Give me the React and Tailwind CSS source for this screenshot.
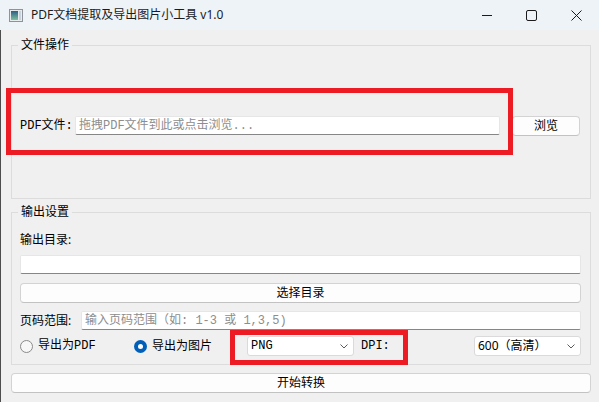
import React from 'react';

const ui = "font-['Noto_Sans','Noto_Sans_CJK_SC',sans-serif]";
const song = "font-['Liberation_Mono','Noto_Sans_CJK_SC',monospace]";

const Chevron = () => (
  <svg width="8" height="5" viewBox="0 0 8 5" className="shrink-0">
    <path d="M0.5 0.5 L4 4 L7.5 0.5" fill="none" stroke="#5c5c5c" strokeWidth="1" />
  </svg>
);

const Combo = ({ children, className = '' }) => (
  <div className={`w-[107px] h-[20px] bg-white border border-[#dadada] rounded-[3px] flex items-center justify-between pl-[3px] pr-[5px] ${className}`}>
    {children}
    <Chevron />
  </div>
);

const Button = ({ children, className = '' }) => (
  <button className={`h-[20px] bg-[#fdfdfd] border border-[#d3d3d3] border-b-[#c2c2c2] rounded-[4px] text-[12px] leading-none text-black ${ui} ${className}`}>
    {children}
  </button>
);

const Input = ({ placeholder, className = '' }) => (
  <div className={`h-[19px] bg-white border border-[#e6e6e6] border-b-[#868686] rounded-[2px] flex items-center pl-[3px] ${className}`}>
    {placeholder && (
      <span className={`text-[12px] leading-none text-[#8d8d8d] ${song}`}>{placeholder}</span>
    )}
  </div>
);

const Group = ({ title, children }) => (
  <fieldset className="border border-[#dcdcdc] m-0 p-0">
    <legend className={`ml-[6px] px-[3px] text-[12px] leading-[16px] text-black ${ui}`}>{title}</legend>
    {children}
  </fieldset>
);

export default function App() {
  return (
    <div className="relative w-[599px] h-[402px] bg-[#f0f0f0] overflow-hidden">
      {/* title bar */}
      <div className="h-[30px] bg-[#eef3f8] flex items-center">
        <svg width="14" height="13" viewBox="0 0 14 13" className="ml-[9px]">
          <defs>
            <linearGradient id="ic" x1="0" y1="0" x2="0" y2="1">
              <stop offset="0" stopColor="#2f5f86" />
              <stop offset="1" stopColor="#7cc09a" />
            </linearGradient>
          </defs>
          <rect x="0.5" y="0.5" width="13" height="12" fill="#e9ecef" stroke="#8d9399" />
          <rect x="2" y="2" width="7" height="9" fill="url(#ic)" />
          <rect x="10" y="2" width="2" height="9" fill="#c9d3dc" />
        </svg>
        <span className={`ml-[8px] text-[12px] leading-none text-[#1b1b1b] ${ui}`}>PDF文档提取及导出图片小工具 v1.0</span>
        <div className="ml-auto flex h-full">
          <div className="w-[45px] h-full flex items-center justify-center">
            <svg width="10" height="10" viewBox="0 0 10 10"><path d="M0 5.5 H10" stroke="#1b1b1b" strokeWidth="1" /></svg>
          </div>
          <div className="w-[45px] h-full flex items-center justify-center">
            <svg width="11" height="11" viewBox="0 0 11 11"><rect x="0.5" y="0.5" width="10" height="10" rx="1.5" fill="none" stroke="#1b1b1b" strokeWidth="1" /></svg>
          </div>
          <div className="w-[45px] h-full flex items-center justify-center">
            <svg width="11" height="11" viewBox="0 0 11 11"><path d="M0.5 0.5 L10.5 10.5 M10.5 0.5 L0.5 10.5" stroke="#1b1b1b" strokeWidth="1" /></svg>
          </div>
        </div>
      </div>

      {/* body */}
      <div className="h-[372px] border-l border-[#4d4d4d] pl-[10px] pr-[8px]">
        <div className="pt-[7px]">
          <Group title="文件操作">
            <div className="h-[145px] flex items-center pl-[8px] pr-[10px]">
              <span className={`w-[55px] shrink-0 text-[12px] leading-none text-black ${song}`}>PDF文件:</span>
              <Input placeholder="拖拽PDF文件到此或点击浏览..." className="flex-1" />
              <Button className="ml-[12px] w-[68px]">浏览</Button>
            </div>
          </Group>
        </div>

        <div className="mt-[5px]">
          <Group title="输出设置">
            <div className="flex flex-col pl-[8px] pr-[9px] pt-[12px] pb-[8px]">
              <span className={`text-[12px] leading-[16px] text-black ${ui}`}>输出目录:</span>
              <Input className="mt-[7px]" />
              <Button className="mt-[9px] w-full">选择目录</Button>
              <div className="mt-[8px] h-[19px] flex items-center">
                <span className={`w-[61px] shrink-0 text-[12px] leading-none text-black ${ui}`}>页码范围:</span>
                <Input placeholder="输入页码范围（如: 1-3 或 1,3,5)" className="flex-1" />
              </div>
              <div className="mt-[6px] h-[20px] flex items-center">
                <div className="w-[114px] flex items-center">
                  <span className="w-[13px] h-[13px] rounded-full border border-[#8a8a8a] bg-[#f7f7f7]" />
                  <span className={`ml-[5px] text-[12px] leading-none text-black ${song}`}>导出为PDF</span>
                </div>
                <div className="w-[113px] flex items-center">
                  <span className="w-[13px] h-[13px] rounded-full bg-[#005fb8] flex items-center justify-center">
                    <span className="w-[5px] h-[5px] rounded-full bg-white" />
                  </span>
                  <span className={`ml-[5px] text-[12px] leading-none text-black ${ui}`}>导出为图片</span>
                </div>
                <Combo>
                  <span className={`text-[12px] leading-none text-black ${song}`}>PNG</span>
                </Combo>
                <span className={`ml-[7px] text-[12px] leading-none text-black ${song}`}>DPI:</span>
                <Combo className="ml-auto">
                  <span className={`text-[12px] leading-none text-black ${ui}`}>600（高清）</span>
                </Combo>
              </div>
            </div>
          </Group>
        </div>

        <Button className="mt-[8px] w-full">开始转换</Button>
      </div>

      {/* red annotation boxes */}
      <div className="absolute left-[6px] top-[88px] w-[507px] h-[67px] border-[5px] border-[#ed1c24] pointer-events-none" />
      <div className="absolute left-[230px] top-[330px] w-[178px] h-[35px] border-[5px] border-[#ed1c24] pointer-events-none" />
    </div>
  );
}
